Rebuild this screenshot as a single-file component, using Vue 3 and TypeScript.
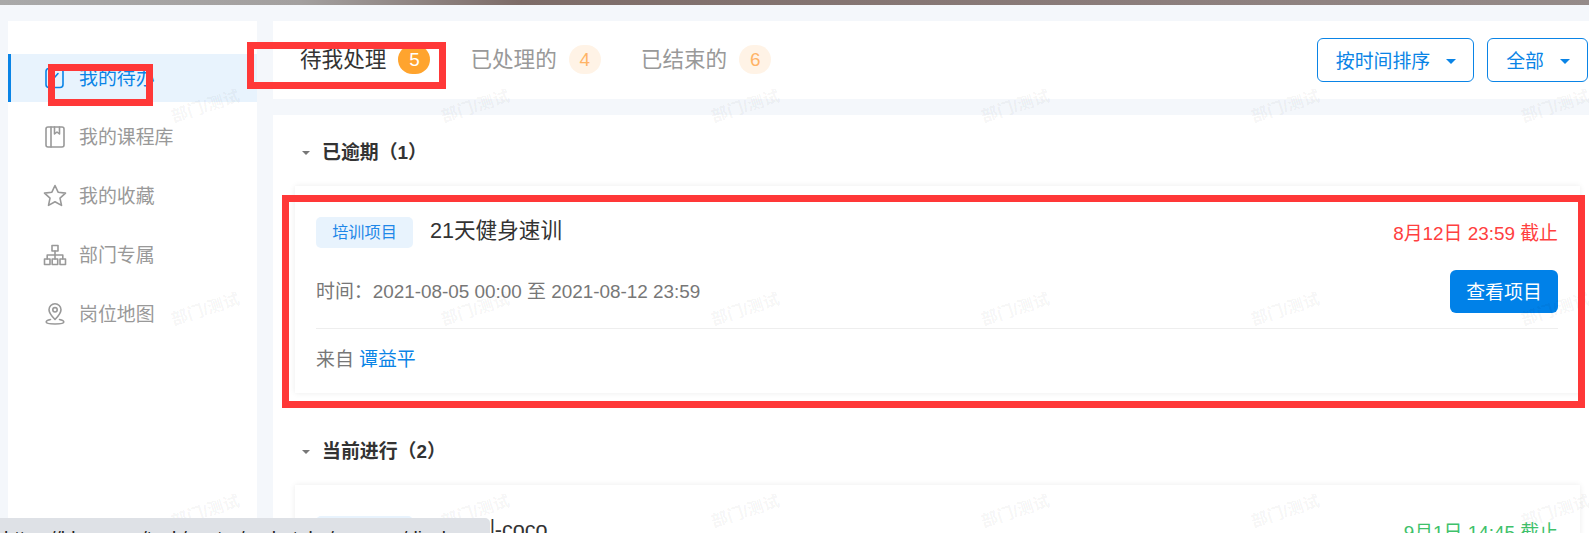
<template>
  <div class="page">
    <div class="top-strip" />

    <div class="workspace">
      <aside class="side-nav">
        <a
          v-for="item in navItems"
          :key="item.label"
          class="nav-item"
          :class="{ active: item.active }"
        >
          <svg class="nav-icon" viewBox="0 0 24 24" fill="none" stroke="currentColor" stroke-width="1.6" stroke-linecap="round" stroke-linejoin="round">
            <template v-if="item.icon === 'todo'">
              <rect x="3" y="2.5" width="17" height="19" rx="3" />
              <path d="M8 15.500l7-8" />
            </template>
            <template v-else-if="item.icon === 'book'">
              <rect x="3" y="2" width="18" height="20" rx="2" />
              <path d="M8 2v20M11.500 2v7l2.500-2 2.500 2V2" />
            </template>
            <path
              v-else-if="item.icon === 'star'"
              d="M12 1.500l3.100 6.700 7.400.9-5.500 5 1.500 7.300-6.500-3.700-6.500 3.700 1.500-7.300-5.500-5 7.400-.9z"
            />
            <template v-else-if="item.icon === 'org'">
              <rect x="9" y="2.500" width="6" height="5.500" />
              <rect x="1.500" y="16" width="5.500" height="5.500" />
              <rect x="9.200" y="16" width="5.500" height="5.500" />
              <rect x="17" y="16" width="5.500" height="5.500" />
              <path d="M12 8v8M4.200 16v-4h15.600v4" />
            </template>
            <template v-else>
              <path d="M12 17.500c-3.500-3.600-6-6.600-6-9.800a6 6 0 0 1 12 0c0 3.200-2.500 6.200-6 9.800z" />
              <circle cx="12" cy="7.800" r="2.200" />
              <path d="M7.500 17.500C5 18 3.200 19 3.200 20c0 1.200 4 2 8.800 2s8.800-.8 8.800-2c0-1-1.800-2-4.300-2.500" />
            </template>
          </svg>
          <span class="nav-label">{{ item.label }}</span>
        </a>
      </aside>

      <main class="content">
        <header class="tab-bar">
          <div class="tabs">
            <div v-for="tab in tabs" :key="tab.label" class="tab" :class="{ active: tab.active }">
              <span class="tab-label">{{ tab.label }}</span>
              <span class="tab-badge">{{ tab.count }}</span>
            </div>
          </div>
          <div class="filters">
            <button v-for="name in filters" :key="name" class="filter-btn" type="button">
              <span class="filter-label">{{ name }}</span>
              <i class="filter-caret" />
            </button>
          </div>
        </header>

        <section class="task-panel">
          <div v-for="group in groups" :key="group.title" class="task-group">
            <h3 class="group-title"><i class="group-caret" />{{ group.title }}</h3>
            <article v-for="task in group.tasks" :key="task.title" class="task-card">
              <div class="card-head">
                <span class="card-tag">培训项目</span>
                <span class="card-title">{{ task.title }}</span>
                <span class="card-deadline" :class="task.tone">{{ task.deadline }}</span>
              </div>
              <div class="card-body">
                <span class="card-range">时间：{{ task.range }}</span>
                <button class="view-btn" type="button">查看项目</button>
              </div>
              <div class="card-foot">来自 <a>{{ task.from }}</a></div>
            </article>
          </div>
        </section>
      </main>
    </div>

    <div class="watermarks">
      <span v-for="n in 18" :key="n" class="watermark">部门/测试</span>
    </div>

    <div class="mark mark-nav" />
    <div class="mark mark-tab" />
    <div class="mark mark-card" />

    <div class="status-url">https://hkcn.com/task/center/undertake/manage/display</div>
  </div>
</template>

<script setup lang="ts">
interface NavItem {
  label: string
  icon: 'todo' | 'book' | 'star' | 'org' | 'pin'
  active?: boolean
}

interface Task {
  title: string
  deadline: string
  tone: 'late' | 'ok'
  range: string
  from: string
}

const navItems: NavItem[] = [
  { label: '我的待办', icon: 'todo', active: true },
  { label: '我的课程库', icon: 'book' },
  { label: '我的收藏', icon: 'star' },
  { label: '部门专属', icon: 'org' },
  { label: '岗位地图', icon: 'pin' }
]

const tabs = [
  { label: '待我处理', count: 5, active: true },
  { label: '已处理的', count: 4, active: false },
  { label: '已结束的', count: 6, active: false }
]

const filters = ['按时间排序', '全部']

const groups: { title: string; tasks: Task[] }[] = [
  {
    title: '已逾期（1）',
    tasks: [
      {
        title: '21天健身速训',
        deadline: '8月12日 23:59 截止',
        tone: 'late',
        range: '2021-08-05 00:00 至 2021-08-12 23:59',
        from: '谭益平'
      }
    ]
  },
  {
    title: '当前进行（2）',
    tasks: [
      {
        title: '入职训-coco',
        deadline: '9月1日 14:45 截止',
        tone: 'ok',
        range: '2021-08-05 00:00 至 2021-09-01 14:45',
        from: '谭益平'
      }
    ]
  }
]
</script>

<style>
html,
body {
  margin: 0;
  overflow: hidden;
}
</style>

<style scoped>
.page {
  position: relative;
  height: 533px;
  overflow: hidden;
  background: #f4f7fb;
  color: #333;
  font-family: 'Liberation Sans', 'Noto Sans CJK SC', sans-serif;
  font-size: 18.9px;
}

.top-strip {
  height: 5px;
  background: linear-gradient(90deg, #a9a9a9 0, #a3a09f 300px, #7d6c68 520px, #8a7c7a 1100px, #958b89 1589px);
}

.workspace {
  display: flex;
  gap: 16px;
  padding: 16px 0 0 8px;
}

.side-nav {
  flex: 0 0 249px;
  height: 520px;
  padding-top: 33px;
  box-sizing: border-box;
  background: #fff;
}

.nav-item {
  height: 48px;
  margin-bottom: 11px;
  padding-left: 35px;
  display: flex;
  align-items: center;
  gap: 12px;
  box-sizing: border-box;
  color: #999;
}

.nav-item.active {
  padding-left: 32px;
  border-left: 3px solid #0a84e6;
  background: #e8f3fd;
  color: #0a84e6;
}

.nav-icon {
  width: 24px;
  height: 24px;
  flex: none;
}

.nav-label {
  padding-bottom: 3px;
}

.content {
  flex: 1;
  min-width: 0;
}

.tab-bar {
  height: 78px;
  margin-bottom: 16px;
  padding: 0 1px 0 27px;
  display: flex;
  align-items: center;
  justify-content: space-between;
  background: #fff;
}

.tabs {
  display: flex;
  gap: 40px;
}

.tab {
  display: flex;
  align-items: center;
  gap: 12px;
  color: #999;
  font-size: 21.6px;
  line-height: 29px;
}

.tab-label {
  padding-bottom: 2px;
}

.tab.active {
  color: #333;
}

.tab-badge {
  width: 32px;
  height: 29px;
  margin-top: -1px;
  border-radius: 15px;
  background: #fff3e6;
  color: #ffb366;
  font-size: 18.9px;
  text-align: center;
}

.tab.active .tab-badge {
  background: #ffa42e;
  color: #fff;
}

.filters {
  display: flex;
  gap: 13px;
}

.filter-btn {
  height: 44px;
  padding: 0 17px 0 18px;
  display: flex;
  align-items: center;
  gap: 16px;
  border: 1px solid #0a84e6;
  border-radius: 6px;
  background: #fff;
  color: #0a84e6;
  font: inherit;
}

.filter-label {
  padding-bottom: 2px;
}

.filter-caret {
  width: 0;
  height: 0;
  margin-top: 2px;
  border: 5.5px solid transparent;
  border-top-color: #0a84e6;
  border-bottom-width: 0;
}

.task-panel {
  min-height: 420px;
  padding: 23px 9px 0 22px;
  background: #fff;
}

.task-group {
  margin-bottom: 44px;
}

.group-title {
  margin: 0 0 18px;
  display: flex;
  align-items: center;
  gap: 12px;
  padding-left: 7px;
  font-size: 18.9px;
  font-weight: 700;
  line-height: 30px;
}

.group-caret {
  width: 0;
  height: 0;
  border: 4px solid transparent;
  border-top-color: #777;
  border-bottom-width: 0;
}

.task-card {
  padding: 31px 22px 18px 21px;
  background: #fff;
  box-shadow: 0 0 6px rgba(0, 0, 0, 0.08);
}

.card-head {
  height: 31px;
  display: flex;
  align-items: center;
}

.card-tag {
  width: 97px;
  height: 31px;
  margin-right: 17px;
  border-radius: 5px;
  background: #e8f3fd;
  color: #1f87e8;
  font-size: 16.2px;
  line-height: 30px;
  text-align: center;
}

.card-title {
  padding-bottom: 3px;
  color: #333;
  font-size: 21.6px;
  line-height: 28px;
}

.card-deadline {
  margin-left: auto;
  padding-bottom: 3px;
}

.card-deadline.late {
  color: #ff4040;
}

.card-deadline.ok {
  color: #3ec16a;
}

.card-body {
  margin-top: 22px;
  padding-bottom: 15px;
  display: flex;
  align-items: center;
  justify-content: space-between;
  border-bottom: 1px solid #eee;
  color: #777;
}

.card-range {
  padding-bottom: 4px;
}

.view-btn {
  width: 108px;
  height: 43px;
  padding: 0 0 3px;
  border: 0;
  border-radius: 6px;
  background: #0081e8;
  color: #fff;
  font: inherit;
}

.card-foot {
  padding-top: 16px;
  color: #777;
  line-height: 30px;
}

.card-foot a {
  color: #0a84e6;
}

.watermarks {
  position: absolute;
  top: 4px;
  left: 70px;
  width: 1620px;
  display: grid;
  grid-template-columns: repeat(6, 270px);
  grid-auto-rows: 202.5px;
  pointer-events: none;
}

.watermark {
  display: flex;
  align-items: center;
  justify-content: center;
  color: rgba(0, 0, 0, 0.05);
  font-size: 16.5px;
  font-weight: 700;
  transform: rotate(-18deg);
}

.mark {
  position: absolute;
  box-sizing: border-box;
  border: 7px solid #ff3838;
}

.mark-nav {
  top: 64px;
  left: 48px;
  width: 105px;
  height: 42px;
}

.mark-tab {
  top: 42px;
  left: 247px;
  width: 199px;
  height: 47px;
}

.mark-card {
  top: 195px;
  left: 282px;
  width: 1303px;
  height: 213px;
}

.status-url {
  position: absolute;
  bottom: 0;
  left: 0;
  width: 490px;
  height: 15px;
  padding: 10px 0 0 4px;
  box-sizing: border-box;
  overflow: hidden;
  border-top-right-radius: 5px;
  background: #dee1e6;
  color: #222;
  font-size: 18.9px;
  line-height: 19px;
  white-space: nowrap;
}
</style>
